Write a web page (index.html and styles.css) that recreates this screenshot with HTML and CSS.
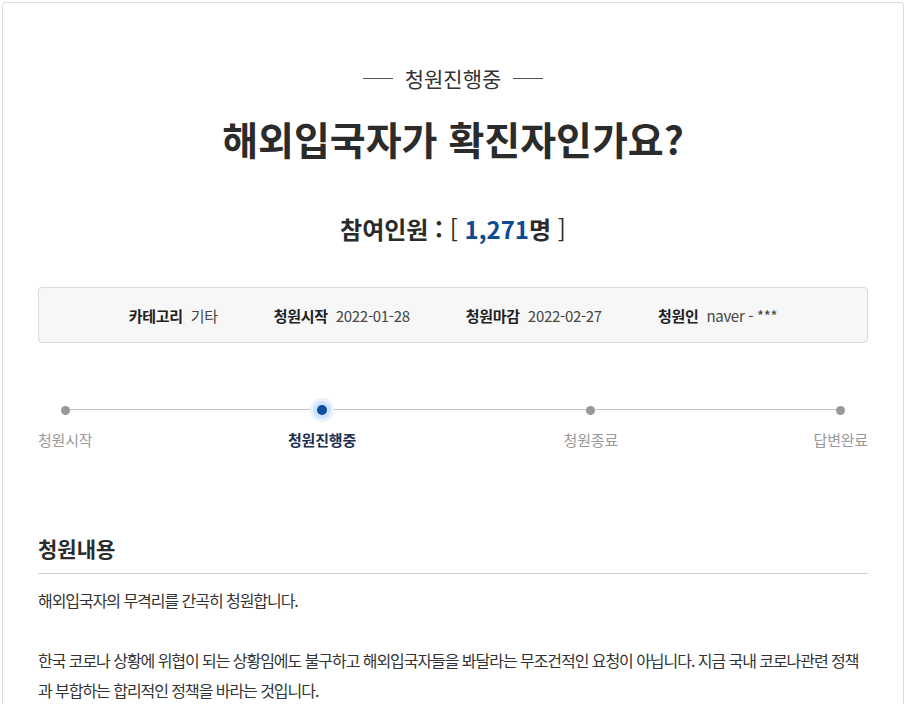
FILE: index.html
```html
<!DOCTYPE html>
<html lang="ko">
<head>
<meta charset="utf-8">
<title>청원진행중</title>
<link rel="stylesheet" href="styles.css">
</head>
<body>
<div class="card">
  <div class="status"><span class="dash"></span><span>청원진행중</span><span class="dash"></span></div>
  <h1 class="title">해외입국자가 확진자인가요?</h1>
  <p class="count">참여인원 : <span class="br">[</span> <span class="num">1,271</span>명 <span class="br">]</span></p>
  <ul class="info">
    <li><b>카테고리</b><span>기타</span></li>
    <li><b>청원시작</b><span>2022-01-28</span></li>
    <li><b>청원마감</b><span>2022-02-27</span></li>
    <li><b>청원인</b><span>naver - ***</span></li>
  </ul>
  <ol class="steps">
    <li class="step"><i class="dot"></i><span>청원시작</span></li>
    <li class="step active"><i class="dot"></i><span>청원진행중</span></li>
    <li class="step"><i class="dot"></i><span>청원종료</span></li>
    <li class="step"><i class="dot"></i><span>답변완료</span></li>
  </ol>
  <h2 class="section">청원내용</h2>
  <div class="body">해외입국자의 무격리를 간곡히 청원합니다.<br><br>한국 코로나 상황에 위협이 되는 상황임에도 불구하고 해외입국자들을 봐달라는 무조건적인 요청이 아닙니다. 지금 국내 코로나관련 정책과 부합하는 합리적인 정책을 바라는 것입니다.</div>
</div>
</body>
</html>
```

FILE: styles.css
```css
* { box-sizing: border-box; }
html, body { margin: 0; padding: 0; background: #fff; }
body {
  font-family: "Noto Sans CJK KR", "Noto Sans", sans-serif;
  color: #333;
  overflow: hidden;
}
.card {
  margin: 2px 2px 0 2px;
  border: 1px solid #dcdcdc;
  border-bottom: none;
  border-radius: 4px 4px 0 0;
  padding: 60px 35px 0 35px;
  height: 702px;
}
.status {
  display: flex;
  justify-content: center;
  align-items: center;
  gap: 12px;
  font-size: 21px;
  line-height: 30px;
  color: #333;
}
.dash { width: 30px; height: 1px; background: #555; }
.title {
  margin: 20px 0 0;
  text-align: center;
  font-size: 39px;
  line-height: 50px;
  font-weight: 700;
  color: #2b2b2b;
}
.count {
  margin: 49px 0 0;
  text-align: center;
  font-size: 24px;
  line-height: 34px;
  font-weight: 700;
  color: #2b2b2b;
}
.count .br { font-weight: 400; }
.count .num { color: #0e4a94; }
.info {
  list-style: none;
  margin: 41px 0 0;
  padding: 0;
  height: 56px;
  border: 1px solid #d9d9d9;
  border-radius: 4px;
  background: #f7f7f7;
  display: flex;
  justify-content: center;
  align-items: center;
  gap: 56px;
  font-size: 15px;
  letter-spacing: -0.3px;
}
.info li { display: flex; gap: 8px; align-items: baseline; }
.info b { font-weight: 700; color: #222; }
.info span { color: #444; }
.steps {
  list-style: none;
  margin: 56px 0 0;
  padding: 0;
  display: flex;
  justify-content: space-between;
  position: relative;
}
.steps::before {
  content: "";
  position: absolute;
  left: 27px;
  right: 27px;
  top: 10px;
  height: 1px;
  background: #c4c4c4;
}
.step {
  display: flex;
  flex-direction: column;
  align-items: center;
  gap: 8px;
  position: relative;
}
.step.active { margin-right: 12px; }
.dot {
  width: 22px;
  height: 22px;
  display: flex;
  align-items: center;
  justify-content: center;
}
.dot::after {
  content: "";
  width: 9px;
  height: 9px;
  border-radius: 50%;
  background: #999;
}
.step.active .dot::after {
  width: 10px;
  height: 10px;
  background: #0b4ea2;
  box-shadow: 0 0 0 4px #cfe2fb, 0 0 0 7px #e9f2fd;
}
.step span {
  font-size: 15px;
  line-height: 22px;
  color: #999;
  letter-spacing: -0.2px;
}
.step.active span { color: #1e2f4e; font-weight: 700; }
.section {
  margin: 82px 0 0;
  padding-bottom: 10px;
  border-bottom: 1px solid #cfcfcf;
  font-size: 21px;
  line-height: 30px;
  font-weight: 700;
  color: #2b2b2b;
}
.body {
  margin-top: 11px;
  font-size: 16px;
  line-height: 30px;
  color: #333;
  letter-spacing: -1.05px;
}
```
